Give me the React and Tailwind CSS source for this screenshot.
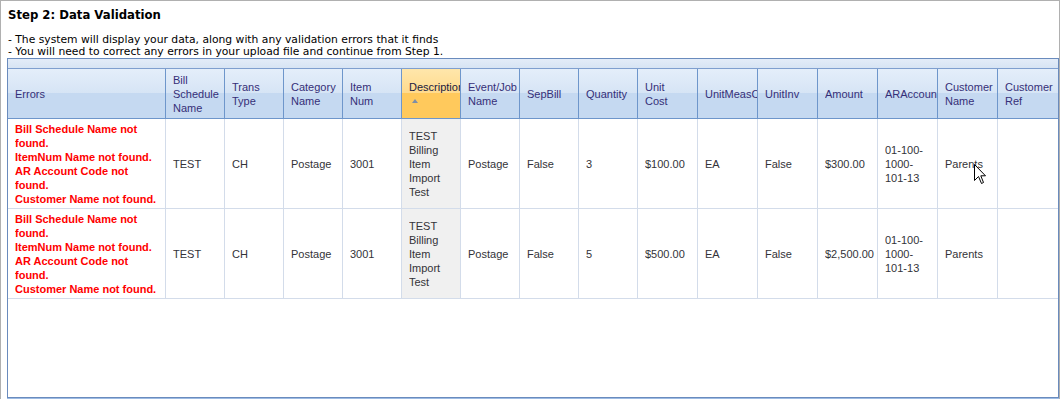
import React from 'react';

const columns = [
    { label: ['Errors'] },
    { label: ['Bill', 'Schedule', 'Name'] },
    { label: ['Trans', 'Type'] },
    { label: ['Category', 'Name'] },
    { label: ['Item', 'Num'] },
    { label: ['Description'], sorted: true },
    { label: ['Event/Job', 'Name'] },
    { label: ['SepBill'] },
    { label: ['Quantity'] },
    { label: ['Unit', 'Cost'] },
    { label: ['UnitMeasCode'] },
    { label: ['UnitInv'] },
    { label: ['Amount'] },
    { label: ['ARAccountCode'] },
    { label: ['Customer', 'Name'] },
    { label: ['Customer', 'Ref'] },
];

const errorLines = [
    'Bill Schedule Name not',
    'found.',
    'ItemNum Name not found.',
    'AR Account Code not',
    'found.',
    'Customer Name not found.',
];

const rows = [
    {
        id: 1,
        cells: [errorLines, ['TEST'], ['CH'], ['Postage'], ['3001'], ['TEST', 'Billing', 'Item', 'Import', 'Test'],
            ['Postage'], ['False'], ['3'], ['$100.00'], ['EA'], ['False'], ['$300.00'],
            ['01-100-', '1000-', '101-13'], ['Parents'], []]
    },
    {
        id: 2,
        cells: [errorLines, ['TEST'], ['CH'], ['Postage'], ['3001'], ['TEST', 'Billing', 'Item', 'Import', 'Test'],
            ['Postage'], ['False'], ['5'], ['$500.00'], ['EA'], ['False'], ['$2,500.00'],
            ['01-100-', '1000-', '101-13'], ['Parents'], []]
    },
];

const gridCols = 'grid grid-cols-[158px_repeat(8,59px)_repeat(7,60px)]';

const HeaderCell = ({ col, last }) => (
    <div
        className={`flex flex-col justify-center overflow-hidden pl-[7px] whitespace-nowrap leading-[14px]
            ${last ? '' : 'border-r border-[#6e96cb]'}
            ${col.sorted
                ? 'bg-[linear-gradient(to_bottom,#ffe6ab_0%,#ffda8c_50%,#ffc95c_50%,#ffc95c_100%)] text-[#1a1a40]'
                : 'bg-[linear-gradient(to_bottom,#e4eefa_0%,#d6e4f5_50%,#c5d9f1_50%,#c5d9f1_100%)] text-[#352f78]'}
        `}
    >
        {col.label.map((l, i) => <div key={i} className="overflow-hidden">{l}</div>)}
        {col.sorted && (
            <div className="h-[14px] flex items-center pl-[3px]">
                <svg width="6" height="4" viewBox="0 0 6 4">
                    <path d="M0 4 L3 0 L6 4 Z" fill="#7d8ea8" />
                </svg>
            </div>
        )}
    </div>
);

const DataCell = ({ lines, isError, sorted, last }) => (
    <div
        className={`flex flex-col justify-center overflow-hidden pl-[7px] whitespace-nowrap leading-[14px]
            ${last ? '' : 'border-r border-[#d3dcea]'}
            ${sorted ? 'bg-[#f0f0f0]' : 'bg-white'}
            ${isError ? 'text-[#ff0000] font-bold' : 'text-[#333338]'}
        `}
    >
        {lines.map((l, i) => <div key={i} className="overflow-hidden">{l}</div>)}
    </div>
);

export default function App() {
    return (
        <div className="w-[1060px] h-[399px] overflow-hidden bg-white border-l border-t border-r border-[#b0b0b0] pl-[6px] flex flex-col">
            {/* Title */}
            <div className="pl-[1px] pt-[7px] text-[11.7px] leading-[15px] font-bold text-black font-['DejaVu_Sans',sans-serif]">
                Step 2: Data Validation
            </div>
            <div className="pl-[1px] mt-[11px] text-[10.75px] leading-[12px] text-black font-['DejaVu_Sans',sans-serif]">
                <div>- The system will display your data, along with any validation errors that it finds</div>
                <div>- You will need to correct any errors in your upload file and continue from Step 1.</div>
            </div>

            {/* Grid */}
            <div className="relative w-[1052px] h-[341px] flex flex-col border border-[#6a8bbd] bg-white text-[11px] font-['Liberation_Sans',Arial,sans-serif]">
                <div className="h-[10px] border-b border-[#7f9fcf] bg-[linear-gradient(to_bottom,#e3ecf8,#d7e4f4)]"></div>
                <div className={`${gridCols} h-[50px] border-b border-[#6e96cb]`}>
                    {columns.map((col, i) => (
                        <HeaderCell key={i} col={col} last={i === columns.length - 1} />
                    ))}
                </div>
                {rows.map((row) => (
                    <div key={row.id} className={`${gridCols} h-[90px] border-b border-[#d3dcea]`}>
                        {row.cells.map((lines, i) => (
                            <DataCell
                                key={i}
                                lines={lines}
                                isError={i === 0}
                                sorted={columns[i].sorted}
                                last={i === row.cells.length - 1}
                            />
                        ))}
                    </div>
                ))}
                <div className="flex-1"></div>

                {/* mouse pointer */}
                <svg className="absolute left-[966px] top-[105px]" width="13" height="21" viewBox="0 0 13 21">
                    <path d="M0.5 0.5 L0.5 16.5 L4.5 12.5 L7.5 19.5 L9.5 18.5 L6.8 11.8 L11.5 11.8 Z" fill="#ffffff" stroke="#000000" strokeWidth="1" strokeLinejoin="miter" />
                </svg>
            </div>
            <div className="w-[1052px] h-[1px] bg-[#9dbbe3]"></div>
        </div>
    );
}
